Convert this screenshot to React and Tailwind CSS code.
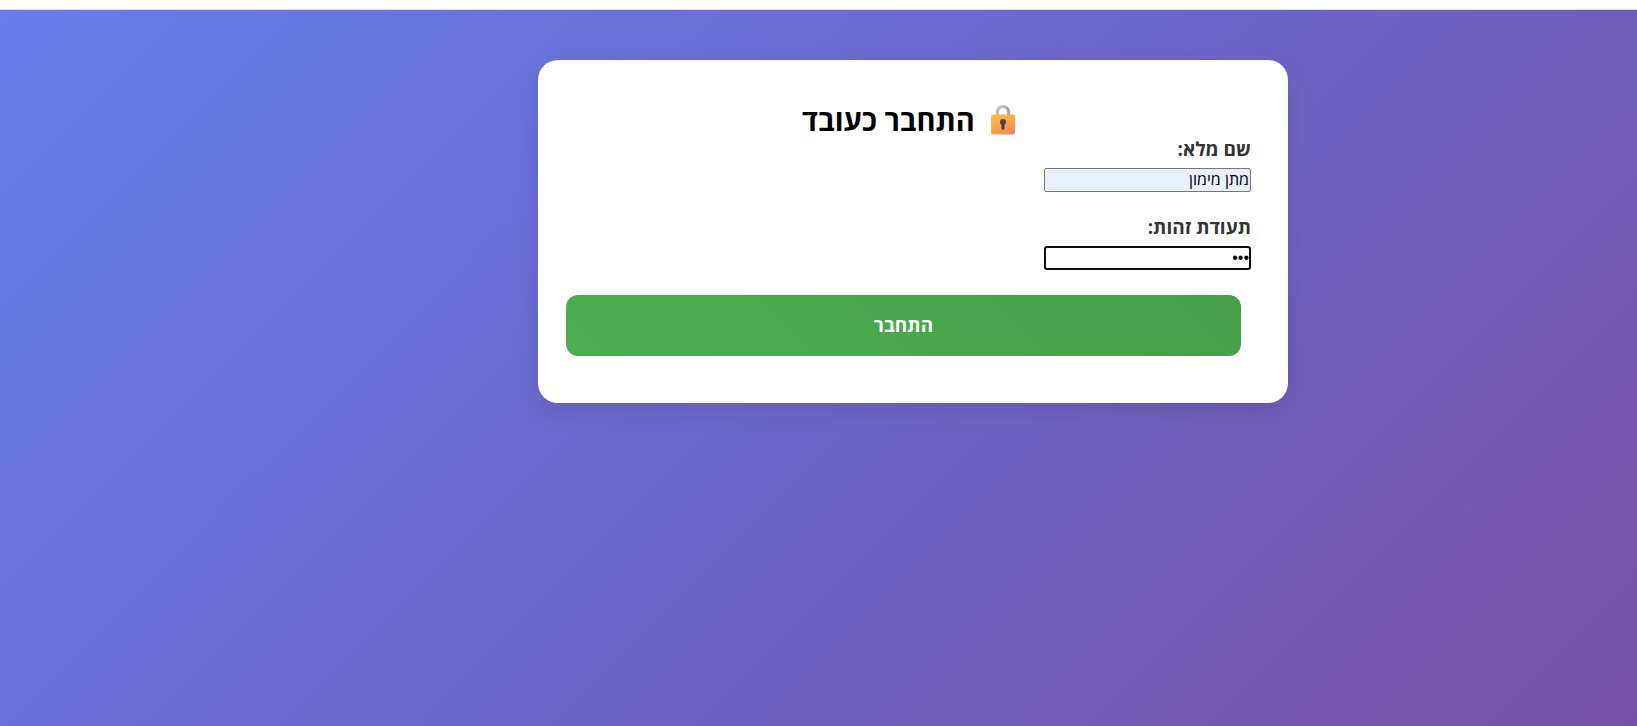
import { useState } from "react";

function LockIcon() {
  return (
    <svg viewBox="0 0 24 30" className="h-[30px] w-6 shrink-0" aria-hidden="true">
      <defs>
        <linearGradient id="lock-body" x1="0.2" y1="0" x2="0.8" y2="1">
          <stop offset="0" stopColor="#fbc13c" />
          <stop offset="0.5" stopColor="#fba64a" />
          <stop offset="1" stopColor="#f98252" />
        </linearGradient>
        <linearGradient id="lock-shackle" x1="0" y1="0" x2="1" y2="0">
          <stop offset="0" stopColor="#bdb6c4" />
          <stop offset="0.5" stopColor="#c9c3cf" />
          <stop offset="1" stopColor="#a99fb3" />
        </linearGradient>
      </defs>
      <path d="M6.4 12V7.2a5.6 5.6 0 0 1 11.2 0V12" fill="none" stroke="url(#lock-shackle)" strokeWidth="3.2" />
      <rect x="0" y="9.5" width="24" height="20" rx="2" fill="url(#lock-body)" />
      <circle cx="12" cy="17" r="3" fill="#5a3d5c" />
      <rect x="10.4" y="17.2" width="3.2" height="7.5" rx="1.5" fill="#4d3b63" />
    </svg>
  );
}

function Field({ id, label, children }) {
  return (
    <div className="mb-[25px] flex flex-col items-start">
      <label htmlFor={id} className="mb-2 text-[19px] leading-[21px] font-bold text-[#333]">
        {label}
      </label>
      {children}
    </div>
  );
}

export default function App() {
  const [name, setName] = useState("מתן מימון");
  const [idNumber, setIdNumber] = useState("123");

  return (
    <div dir="rtl" className="flex min-h-screen flex-col bg-white pt-[9px] font-['Open_Sans',sans-serif]">
      <div className="h-px bg-[#dcdde6]" />
      <main className="grow bg-linear-[135deg,#667eea,#764ba2_110%] pt-[50px] pl-[189px]">
        <form
          onSubmit={(e) => e.preventDefault()}
          className="mx-auto w-full max-w-[750px] rounded-[20px] bg-white pt-[41px] pr-[37px] pb-[47px] pl-7 shadow-[0_8px_25px_rgba(0,0,0,0.1)]"
        >
          <h2 className="flex items-center justify-center gap-4 text-[29px] leading-[38px] font-bold text-black">
            <LockIcon />
            <span>התחבר כעובד</span>
          </h2>
          <Field id="full-name" label="שם מלא:">
            <input
              id="full-name"
              type="text"
              value={name}
              onChange={(e) => setName(e.target.value)}
              className="h-6 w-[207px] rounded-[2px] border border-[#767676] bg-[#e8f0fe] px-px pb-0.5 text-base leading-5 text-black outline-none"
            />
          </Field>
          <Field id="id-number" label="תעודת זהות:">
            <input
              id="id-number"
              type="password"
              value={idNumber}
              onChange={(e) => setIdNumber(e.target.value)}
              className="h-6 w-[207px] rounded-[3px] border-2 border-[#101010] bg-white font-['Liberation_Sans',sans-serif] text-base leading-5 text-black outline-none"
            />
          </Field>
          <div className="pr-2.5">
            <button
              type="submit"
              className="h-[61px] w-full rounded-xl bg-linear-[45deg,#4caf50,#45a049] text-[19px] font-bold text-white"
            >
              התחבר
            </button>
          </div>
        </form>
      </main>
    </div>
  );
}
